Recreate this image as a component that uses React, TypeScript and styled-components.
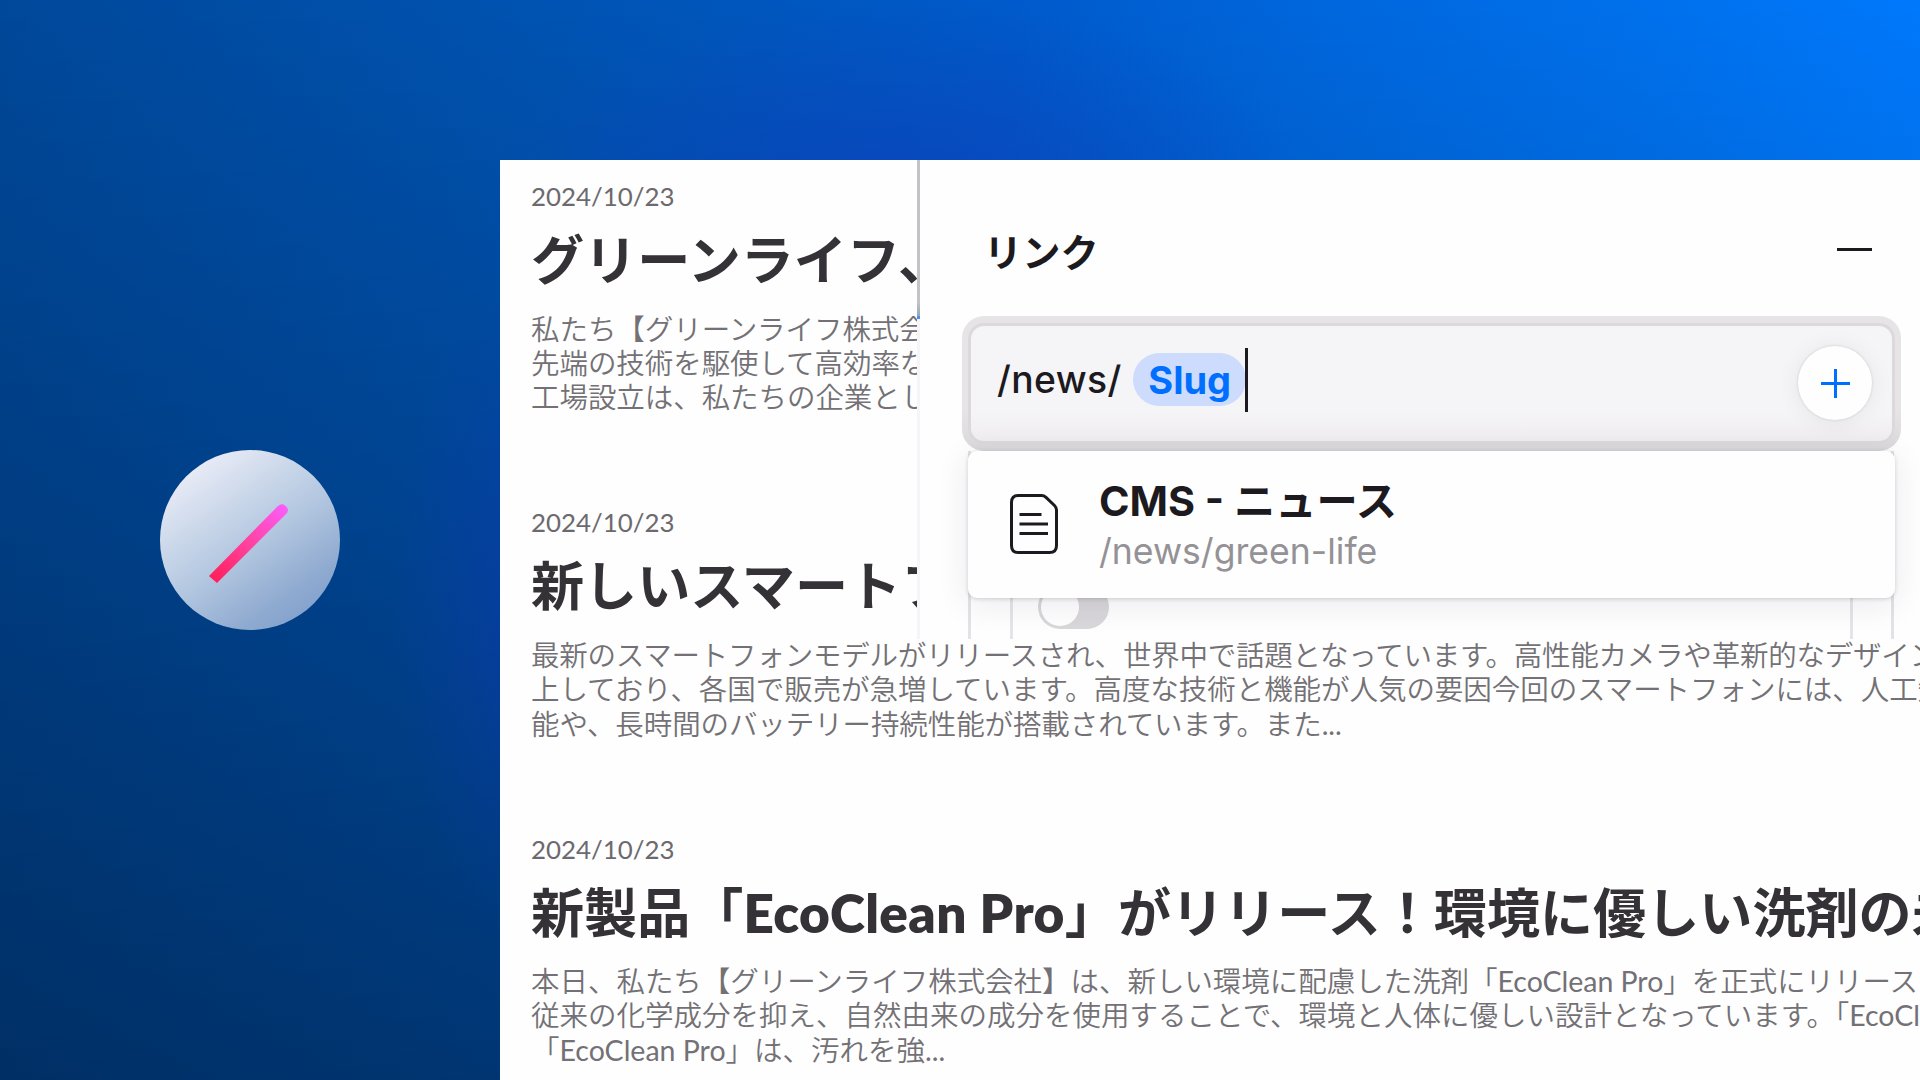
import React from 'react';
import styled, { createGlobalStyle } from 'styled-components';

const GlobalStyle = createGlobalStyle`
  * {
    box-sizing: border-box;
  }

  body {
    margin: 0;
    overflow: hidden;
  }
`;

// Layout
const Stage = styled.div`
  width: 1920px;
  height: 1080px;
  display: grid;
  grid-template-columns: 500px 1fr;
  overflow: hidden;
  background:
    radial-gradient(ellipse 420px 200px at 900px 200px, rgba(16, 62, 192, 0.6) 0%, rgba(16, 62, 192, 0) 100%),
    radial-gradient(ellipse 150px 330px at 540px 610px, rgba(16, 54, 190, 0.4) 0%, rgba(16, 54, 190, 0) 100%),
    linear-gradient(180deg, rgba(0, 0, 0, 0) 0%, rgba(0, 0, 0, 0.37) 100%),
    linear-gradient(96deg, #00489a 0%, #0053b2 27%, #005acb 50%, #0066dc 64%, #0070ec 81%, #007aff 97%);
`;

const Sidebar = styled.aside`
  display: flex;
  align-items: center;
  justify-content: center;
`;

const Badge = styled.div`
  width: 180px;
  height: 180px;
  border-radius: 50%;
  background: linear-gradient(145deg, #f0f0fa 8%, #d3dded 28%, #b3c7e0 52%, #8faad0 77%, #7f9fcc 92%);
  overflow: hidden;

  svg {
    display: block;
  }
`;

const Main = styled.main`
  padding-top: 160px;
  min-width: 0;
  overflow: hidden;
`;

const Sheet = styled.div`
  position: relative;
  height: 920px;
  padding: 17px 0 0 31px;
  background: #fefefe;
  overflow: hidden;
`;

// News list
const Article = styled.article`
  height: 326.3px;
  font-family: Lato, 'Noto Sans CJK JP', sans-serif;
  white-space: nowrap;
`;

const ArticleDate = styled.time`
  display: block;
  font-size: 25.9px;
  line-height: 38px;
  color: #6c6a6e;
`;

const ArticleTitle = styled.h2`
  margin: 13px 0 19.5px;
  font-size: 53.1px;
  font-weight: 700;
  line-height: 64px;
  color: #343236;

  b {
    font-weight: 800;
    letter-spacing: 0.4px;
  }
`;

const ArticleBody = styled.p`
  margin: 0;
  font-size: 28.5px;
  font-weight: 350;
  line-height: 34.4px;
  color: #737175;

  b {
    font-weight: 400;
  }
`;

const Line = styled.span<{ $tracking?: number }>`
  display: block;
  height: 34.4px;
  letter-spacing: ${({ $tracking = 0 }) => $tracking}px;
`;

// Link inspector
const Inspector = styled.section`
  position: absolute;
  top: 0;
  left: 417px;
  right: 0;
  height: 479px;
  display: flex;
  background: #fefefe;
  overflow: hidden;
  font-family: Inter, 'Noto Sans CJK JP', sans-serif;
`;

const Edge = styled.div`
  flex: none;
  width: 3px;
  background: linear-gradient(
    180deg,
    #c4c2c6 0,
    #c4c2c6 142px,
    #93aab5 156px,
    #4a90f5 156px,
    #4a90f5 159px,
    #f6f4f8 159px
  );
`;

const InspectorBody = styled.div`
  flex: 1;
  display: flex;
  flex-direction: column;
`;

const InspectorHeader = styled.header`
  height: 156px;
  padding: 28px 48px 0 64px;
  display: flex;
  align-items: center;
  justify-content: space-between;
`;

const InspectorTitle = styled.h3`
  margin: 2px 0 0;
  font-size: 38.2px;
  font-weight: 700;
  line-height: 44px;
  color: #1c1a1e;
`;

const Minus = styled.span`
  width: 35px;
  height: 3px;
  margin-bottom: 6px;
  background: #1c1a1e;
`;

const Field = styled.div`
  flex: none;
  height: 135px;
  margin: 0 19px 0 42px;
  padding: 7px 6px;
  border-radius: 22px;
  background: linear-gradient(180deg, #e6e4e7 70%, #dad8db 100%);
`;

const FieldInner = styled.div`
  height: 121px;
  display: flex;
  align-items: center;
  padding: 0 20px 0 26px;
  border: 3px solid #dbd9dc;
  border-radius: 16px;
  background: linear-gradient(180deg, #f5f4f7 75%, #efedf0 100%);
`;

const FieldText = styled.span`
  font-size: 37.3px;
  font-weight: 500;
  color: #1c1a1e;
  letter-spacing: 0.4px;
  margin-top: -8px;
`;

const Token = styled.span`
  height: 53px;
  width: 113px;
  margin: -8px 0 0 11.5px;
  border-radius: 27px;
  display: flex;
  align-items: center;
  justify-content: center;
  background: #cddcfc;
  color: #006fff;
  font-size: 38px;
  font-weight: 700;
`;

const Caret = styled.span`
  width: 3px;
  height: 64px;
  margin: -7px 0 0 -1px;
  background: #1c1a1e;
`;

const AddButton = styled.button`
  width: 74px;
  height: 74px;
  margin: -1px 0 0 auto;
  padding: 0;
  border: none;
  border-radius: 50%;
  background: #fefefe;
  box-shadow: 0 0 3px rgba(0, 0, 0, 0.14), 0 2px 24px rgba(0, 0, 0, 0.07);
`;

const Rest = styled.div`
  position: relative;
  flex: 1;
  margin: 0 26px 0 48px;
  padding: 0 38px 0 39px;
  border: solid #e4e2e6;
  border-width: 0 3px;
`;

const Group = styled.div`
  height: 100%;
  padding: 134px 0 0 25px;
  border: solid #e6e4e8;
  border-width: 0 3px;
`;

const Toggle = styled.div`
  width: 71px;
  height: 44px;
  padding: 3px;
  border-radius: 22px;
  background: #d8d7da;
`;

const Knob = styled.div`
  width: 38px;
  height: 38px;
  border-radius: 50%;
  background: #fefefe;
`;

const Suggestion = styled.div`
  position: absolute;
  top: 0;
  left: -3px;
  right: -4px;
  height: 147px;
  display: flex;
  align-items: center;
  padding-left: 42px;
  border-radius: 9px;
  background: #fefefe;
  box-shadow: 0 1px 4px rgba(0, 0, 0, 0.16), 0 6px 32px rgba(60, 40, 80, 0.1);

  svg {
    margin-bottom: 1px;
  }
`;

const SuggestionText = styled.div`
  margin: 4px 0 0 41px;
`;

const SuggestionTitle = styled.div`
  font-size: 41.3px;
  font-weight: 700;
  line-height: 50px;
  color: #1c1a1e;
  white-space: nowrap;
`;

const SuggestionPath = styled.div`
  font-size: 35.6px;
  line-height: 51px;
  color: #949296;
`;

const NEWS = [
  {
    date: '2024/10/23',
    title: 'グリーンライフ、',
    tracking: [-0.06, -0.06, -0.06],
    lines: ['私たち【グリーンライフ株式会', '先端の技術を駆使して高効率な', '工場設立は、私たちの企業とし'],
  },
  {
    date: '2024/10/23',
    title: '新しいスマートフ',
    tracking: [-0.22, -0.05, -0.1],
    lines: [
      '最新のスマートフォンモデルがリリースされ、世界中で話題となっています。高性能カメラや革新的なデザイン',
      '上しており、各国で販売が急増しています。高度な技術と機能が人気の要因今回のスマートフォンには、人工知',
      '能や、長時間のバッテリー持続性能が搭載されています。また...',
    ],
  },
  {
    date: '2024/10/23',
    title: '新製品「EcoClean Pro」がリリース！環境に優しい洗剤の未',
    tracking: [-0.03, 0, 0],
    lines: [
      '本日、私たち【グリーンライフ株式会社】は、新しい環境に配慮した洗剤「EcoClean Pro」を正式にリリース',
      '従来の化学成分を抑え、自然由来の成分を使用することで、環境と人体に優しい設計となっています。「EcoCl',
      '「EcoClean Pro」は、汚れを強...',
    ],
  },
];

// Latin words carry their own weight next to the Japanese text
const withLatin = (text: string) =>
  text.split(/([A-Za-z.][A-Za-z. ]*)/).map((part, i) => (i % 2 ? <b key={i}>{part}</b> : part));

const SlashLogo = () => (
  <svg width="180" height="180" viewBox="0 0 180 180" fill="none">
    <defs>
      <linearGradient id="slash" x1="52" y1="130" x2="125" y2="57" gradientUnits="userSpaceOnUse">
        <stop stopColor="#ff1f5a" />
        <stop offset="0.5" stopColor="#ff42a0" />
        <stop offset="1" stopColor="#fc5cf8" />
      </linearGradient>
    </defs>
    <path
      d="M49 126 117.500 56.500Q121.500 52.500 125 55.500L127 57.500Q129 60.500 126.500 63.500L57 133Z"
      fill="url(#slash)"
    />
  </svg>
);

const DocumentIcon = () => (
  <svg width="48" height="60" viewBox="0 0 48 60" fill="none" stroke="#1c1a1e" strokeWidth="3">
    <path d="M8 1.500H31.500Q34 1.500 36 3.300L44.500 11.500Q46.500 13.500 46.500 16.500V51.500Q46.500 58.500 39.500 58.500H8Q1.500 58.500 1.500 51.500V8.500Q1.500 1.500 8 1.500Z" />
    <path d="M9.500 20.500H31.500M9.500 30H38M9.500 39.500H38" />
  </svg>
);

const App: React.FC = () => {
  return (
    <>
      <GlobalStyle />
      <Stage>
        <Sidebar>
          <Badge>
            <SlashLogo />
          </Badge>
        </Sidebar>

        <Main>
          <Sheet>
            {NEWS.map((item) => (
              <Article key={item.title}>
                <ArticleDate>{item.date}</ArticleDate>
                <ArticleTitle>{withLatin(item.title)}</ArticleTitle>
                <ArticleBody>
                  {item.lines.map((line, i) => (
                    <Line key={line} $tracking={item.tracking[i]}>
                      {withLatin(line)}
                    </Line>
                  ))}
                </ArticleBody>
              </Article>
            ))}

            <Inspector>
              <Edge />
              <InspectorBody>
                <InspectorHeader>
                  <InspectorTitle>リンク</InspectorTitle>
                  <Minus />
                </InspectorHeader>

                <Field>
                  <FieldInner>
                    <FieldText>/news/</FieldText>
                    <Token>Slug</Token>
                    <Caret />
                    <AddButton aria-label="追加">
                      <svg width="74" height="74" viewBox="0 0 74 74" stroke="#006fff" strokeWidth="3">
                        <path d="M23 37.500H52M37.500 23V52" />
                      </svg>
                    </AddButton>
                  </FieldInner>
                </Field>

                <Rest>
                  <Group>
                    <Toggle>
                      <Knob />
                    </Toggle>
                  </Group>
                  <Suggestion>
                    <DocumentIcon />
                    <SuggestionText>
                      <SuggestionTitle>CMS - ニュース</SuggestionTitle>
                      <SuggestionPath>/news/green-life</SuggestionPath>
                    </SuggestionText>
                  </Suggestion>
                </Rest>
              </InspectorBody>
            </Inspector>
          </Sheet>
        </Main>
      </Stage>
    </>
  );
};

export default App;
